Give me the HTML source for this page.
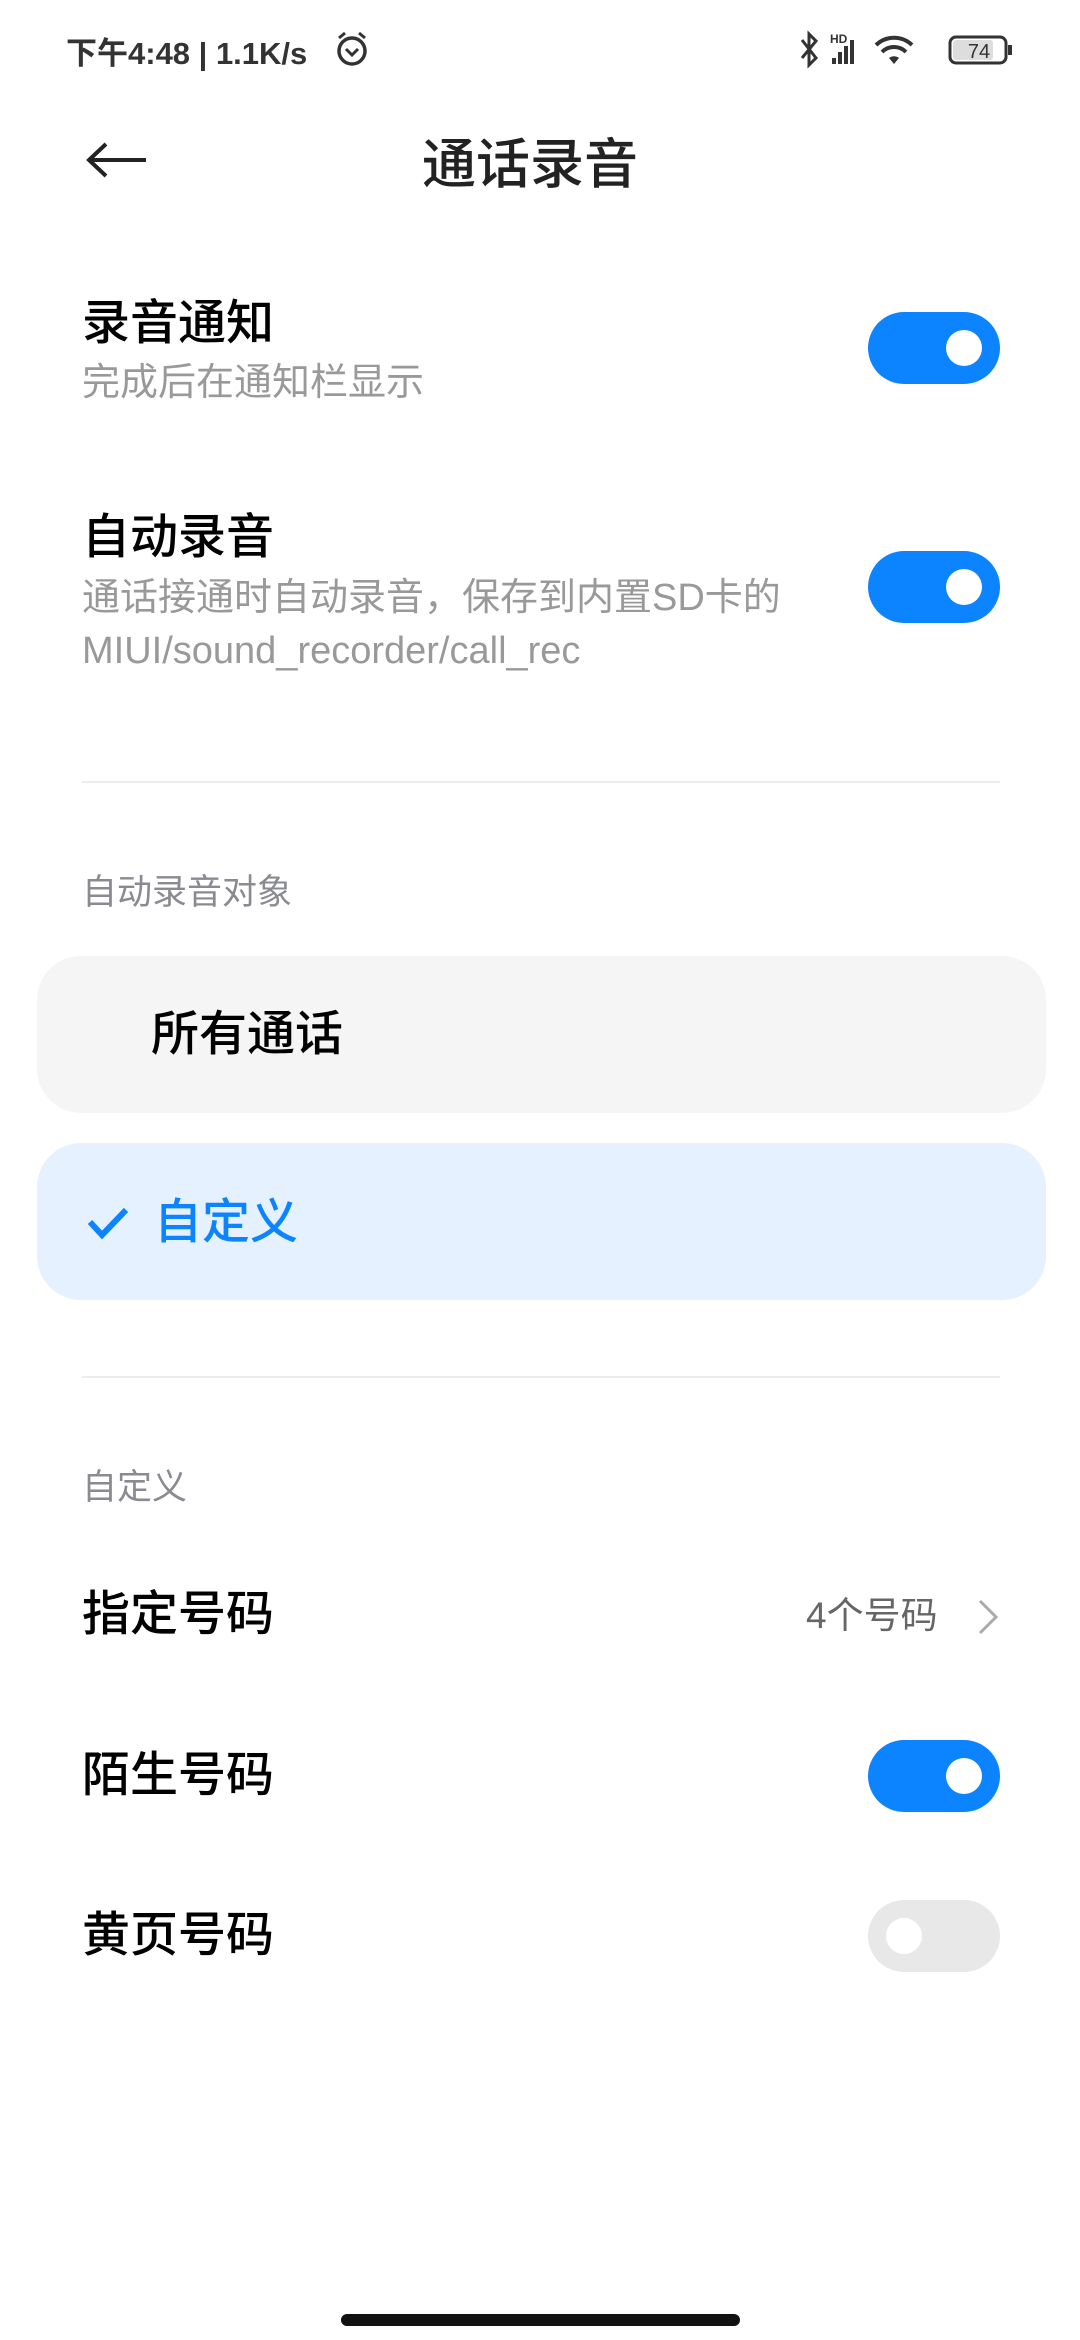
<!DOCTYPE html>
<html><head><meta charset="utf-8"><style>
*{margin:0;padding:0;box-sizing:border-box}
body{width:1080px;height:2340px;background:#fff;position:relative;overflow:hidden;font-family:"Liberation Sans","Noto Sans CJK SC",sans-serif;color:#000}
.a{position:absolute;white-space:nowrap}
.t{font-size:48px;font-weight:500;line-height:1}
.s{font-size:38px;color:#999;line-height:1}
.lab{font-size:35px;color:#8a8a92;line-height:1}
.tg{position:absolute;width:132px;height:72px;border-radius:36px;background:#0d84ff;left:868px}
.tg::after{content:"";position:absolute;width:36px;height:36px;border-radius:50%;background:#fff;right:18px;top:18px}
.tg.off{background:#e8e8e8}
.tg.off::after{right:auto;left:18px}
.div{position:absolute;left:82px;width:918px;height:2px;background:#ececec}
</style></head><body>
<div class="a" style="left:66px;top:28px;font-size:31px;font-weight:bold;color:#333">下午4:48 | 1.1K/s</div>
<svg class="a" style="left:334px;top:30px" width="36" height="38" viewBox="0 0 36 38"><circle cx="18" cy="21" r="13" fill="none" stroke="#333" stroke-width="3.5"/><path d="M12 19l6 6 6-6" fill="none" stroke="#333" stroke-width="3"/><path d="M5 8l6-5M31 8l-6-5" stroke="#333" stroke-width="3"/></svg>
<svg class="a" style="left:798px;top:30px" width="220" height="40" viewBox="0 0 220 40"><path d="M4 10l14 18-7 7V4l7 7L4 28" fill="none" stroke="#333" stroke-width="3"/><text x="32" y="13" font-size="12" font-weight="bold" fill="#333" font-family="Liberation Sans">HD</text><rect x="34" y="28" width="4" height="6" fill="#333"/><rect x="40" y="22" width="4" height="12" fill="#333"/><rect x="46" y="16" width="4" height="18" fill="#333"/><rect x="52" y="10" width="4" height="24" fill="#333"/><path d="M96 34l-5-6a8 8 0 0 1 10 0z" fill="#333"/><path d="M84 22a17 17 0 0 1 24 0M78 15a26 26 0 0 1 36 0" fill="none" stroke="#333" stroke-width="4"/><rect x="152" y="7" width="56" height="26" rx="6" fill="#fff" stroke="#333" stroke-width="3"/><rect x="155" y="10" width="40" height="20" rx="3" fill="#ddd"/><rect x="210" y="15" width="4" height="10" fill="#333"/><text x="181" y="28" font-size="20" text-anchor="middle" fill="#333" font-family="Liberation Sans">74</text></svg>
<svg class="a" style="left:86px;top:142px" width="62" height="36" viewBox="0 0 62 36"><path d="M60 18H4M20 2L3 18l17 16" fill="none" stroke="#222" stroke-width="4"/></svg>
<div class="a" style="left:0;width:1060px;text-align:center;top:120px;font-size:54px;font-weight:500;color:#222">通话录音</div>

<div class="a t" style="left:82px;top:300px">录音通知</div>
<div class="a s" style="left:82px;top:364px">完成后在通知栏显示</div>
<div class="tg" style="top:312px"></div>

<div class="a t" style="left:82px;top:514px">自动录音</div>
<div class="a s" style="left:82px;top:579px">通话接通时自动录音，保存到内置SD卡的</div>
<div class="a s" style="left:82px;top:632px">MIUI/sound_recorder/call_rec</div>
<div class="tg" style="top:551px"></div>

<div class="div" style="top:781px"></div>
<div class="a lab" style="left:82px;top:875px">自动录音对象</div>
<div class="a" style="left:37px;top:956px;width:1009px;height:157px;border-radius:44px;background:#f5f5f5"></div>
<div class="a t" style="left:151px;top:1011px">所有通话</div>
<div class="a" style="left:37px;top:1143px;width:1009px;height:157px;border-radius:44px;background:#e5f1ff"></div>
<svg class="a" style="left:86px;top:1206px" width="44" height="34" viewBox="0 0 44 34"><path d="M4 16l12 13L40 4" fill="none" stroke="#0d84ff" stroke-width="6"/></svg>
<div class="a t" style="left:154px;top:1199px;color:#0d84ff">自定义</div>

<div class="div" style="top:1376px"></div>
<div class="a lab" style="left:82px;top:1470px">自定义</div>

<div class="a t" style="left:82px;top:1591px">指定号码</div>
<div class="a" style="left:806px;top:1597px;font-size:37px;color:#666;line-height:1">4个号码</div>
<svg class="a" style="left:976px;top:1597px" width="24" height="40" viewBox="0 0 24 40"><path d="M4 4l16 16L4 36" fill="none" stroke="#aaa" stroke-width="3"/></svg>

<div class="a t" style="left:82px;top:1752px">陌生号码</div>
<div class="tg" style="top:1740px"></div>
<div class="a t" style="left:82px;top:1912px">黄页号码</div>
<div class="tg off" style="top:1900px"></div>

<div class="a" style="left:341px;top:2314px;width:399px;height:12px;border-radius:6px;background:#111"></div>
</body></html>
